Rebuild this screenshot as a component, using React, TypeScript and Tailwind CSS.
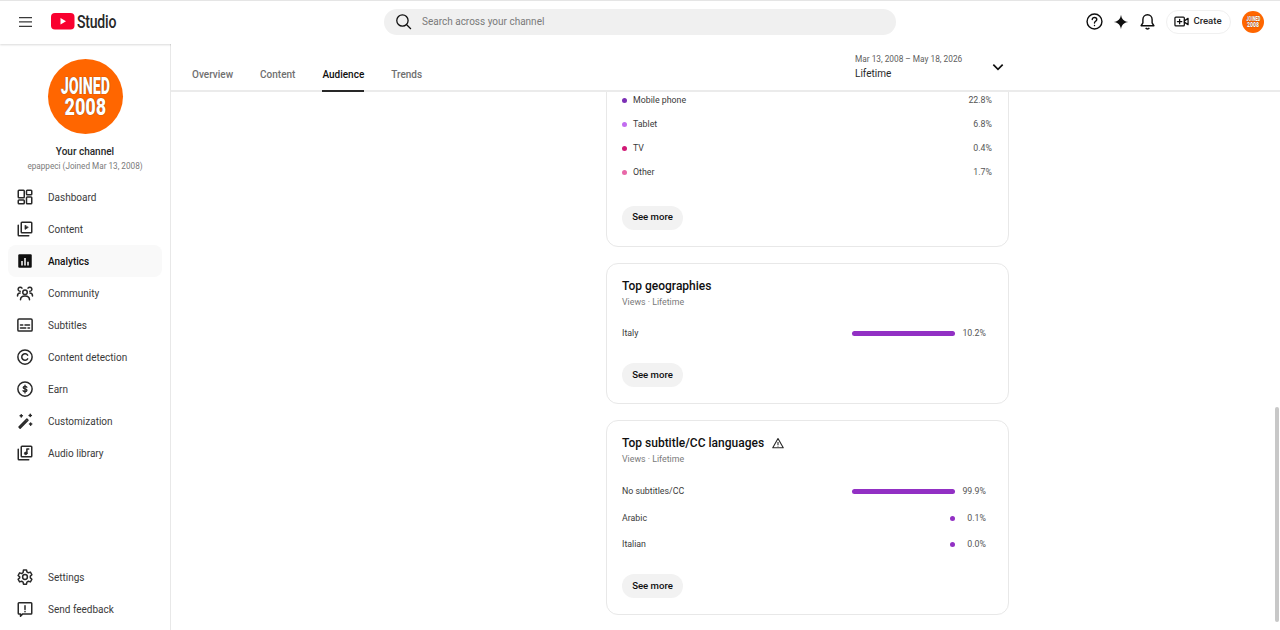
import type { ReactNode } from "react";

const ic = "fill-none stroke-[#282828]";

function Icon({ children, size = 18 }: { children: ReactNode; size?: number }) {
  return (
    <svg width={size} height={size} viewBox="0 0 24 24" className={ic} strokeWidth={2} strokeLinecap="round" strokeLinejoin="round">
      {children}
    </svg>
  );
}

const navIcons: Record<string, ReactNode> = {
  Dashboard: (
    <Icon>
      <rect x="3" y="3" width="8" height="10" rx="1" />
      <rect x="14" y="3" width="7" height="6" rx="1" />
      <rect x="3" y="16" width="8" height="5" rx="1" />
      <rect x="14" y="12" width="7" height="9" rx="1" />
    </Icon>
  ),
  Content: (
    <Icon>
      <rect x="7" y="3" width="14" height="14" rx="1" />
      <path d="M3 7v13a1 1 0 0 0 1 1h13" />
      <path d="M12 7.500v5l4-2.500z" fill="#282828" strokeWidth={1} />
    </Icon>
  ),
  Analytics: (
    <svg width="18" height="18" viewBox="0 0 24 24">
      <rect x="3" y="3" width="18" height="18" rx="1.500" fill="#0f0f0f" />
      <path d="M7 12h2v6H7zM11 8h2v10h-2zM15 13h2v5h-2z" fill="#fff" />
    </svg>
  ),
  Community: (
    <Icon>
      <circle cx="12" cy="11" r="3" />
      <path d="M6 21c0-3.500 2.500-5 6-5s6 1.500 6 5" />
      <path d="M8 5.500a2.800 2.800 0 1 0-2.500 4.300M16 5.500a2.800 2.800 0 1 1 2.500 4.300" />
      <path d="M2 16c0-2.500 1.500-4 3.500-4M22 16c0-2.500-1.500-4-3.500-4" />
    </Icon>
  ),
  Subtitles: (
    <Icon>
      <rect x="2.500" y="4" width="19" height="16" rx="1.500" />
      <path d="M6 12h3M12 12h6M6 16h7M16 16h2" />
    </Icon>
  ),
  "Content detection": (
    <Icon>
      <circle cx="12" cy="12" r="9.500" />
      <path d="M15.500 9.500a4.300 4.300 0 1 0 0 5" />
    </Icon>
  ),
  Earn: (
    <Icon>
      <circle cx="12" cy="12" r="9.500" />
      <path d="M14.500 9.600c-.4-.8-1.200-1.200-2.500-1.200-1.500 0-2.400.7-2.400 1.700 0 2.500 5 1.200 5 3.700 0 1.100-1 1.800-2.600 1.800-1.300 0-2.200-.5-2.700-1.300M12 6.800v10.400" strokeWidth={1.800} />
    </Icon>
  ),
  Customization: (
    <Icon>
      <path d="M4 20l1.500 1.500L16 11l-1.500-1.500z" />
      <path d="M7 3.500v3M5.500 5h3M19 3v3M17.500 4.500h3M19.500 14.500v3M18 16h3" />
    </Icon>
  ),
  "Audio library": (
    <Icon>
      <rect x="7" y="3" width="14" height="14" rx="1" />
      <path d="M3 7v13a1 1 0 0 0 1 1h13" />
      <circle cx="13" cy="12.500" r="1.800" fill="#282828" strokeWidth={1} />
      <path d="M14.500 12V6.500h2.500" />
    </Icon>
  ),
  Settings: (
    <Icon>
      <circle cx="12" cy="12" r="3.200" />
      <path d="M10 2.500h4l.6 2.800 1.900 1.100 2.700-.9 2 3.500-2.100 1.900v2.200l2.100 1.900-2 3.500-2.700-.9-1.900 1.100-.6 2.800h-4l-.6-2.800-1.900-1.100-2.700.9-2-3.500 2.100-1.900V11.900L2.800 10l2-3.500 2.700.9 1.900-1.100z" />
    </Icon>
  ),
  "Send feedback": (
    <Icon>
      <path d="M3 4.500a1 1 0 0 1 1-1h16a1 1 0 0 1 1 1v13a1 1 0 0 1-1 1H9l-3 3v-3H4a1 1 0 0 1-1-1z" />
      <path d="M12 7.500v5M12 15.300v.2" />
    </Icon>
  ),
};

const nav = ["Dashboard", "Content", "Analytics", "Community", "Subtitles", "Content detection", "Earn", "Customization", "Audio library"];

function NavRow({ label, active }: { label: string; active?: boolean }) {
  return (
    <div className={`mx-2 flex h-8 items-center gap-[14px] rounded-lg pl-2 ${active ? "bg-[#f9f9f9] font-medium text-[#0f0f0f]" : "text-[#3a3a3a]"}`}>
      <span className="flex w-[18px] justify-center">{navIcons[label]}</span>
      <span className="text-[10px]">{label}</span>
    </div>
  );
}

function JoinedBadge({ size, text }: { size: string; text: string }) {
  return (
    <div className={`flex flex-col items-center justify-center rounded-full bg-[#ff6600] font-black text-white ${size} ${text}`}>
      <span className="scale-x-[0.68] scale-y-[1.1] [text-shadow:0_0_1px_#5a2000]">JOINED</span>
      <span className="scale-x-[0.86] scale-y-[1.1] [text-shadow:0_0_1px_#5a2000]">2008</span>
    </div>
  );
}

function SeeMore() {
  return (
    <button className="flex h-6 w-[61px] items-center justify-center rounded-full bg-[#f2f2f2] text-[9.600px] font-medium text-[#0f0f0f]">
      See more
    </button>
  );
}

function BarRow({ label, value, width }: { label: string; value: string; width: number }) {
  return (
    <div className="flex h-[26.500px] items-center text-[8.800px] text-[#3a3a3a]">
      <span className="flex-1">{label}</span>
      <span className="flex h-[5px] w-[103px] justify-end">
        <span className="h-[5px] rounded-full bg-[#9230c4]" style={{ width }} />
      </span>
      <span className="w-[31px] text-right text-[#555]">{value}</span>
    </div>
  );
}

function DeviceRow({ dot, label, value }: { dot: string; label: string; value: string }) {
  return (
    <div className="flex h-6 items-center text-[8.800px] text-[#3a3a3a]">
      <span className={`mr-[6px] h-[5px] w-[5px] rounded-full ${dot}`} />
      <span className="flex-1">{label}</span>
      <span className="text-[#555]">{value}</span>
    </div>
  );
}

export default function App() {
  return (
    <div className="flex h-[630px] w-[1280px] flex-col overflow-hidden bg-white font-['Roboto',sans-serif]">
      {/* header */}
      <header className="z-10 flex h-[44px] shrink-0 items-center border-t border-[#e5e5e5] bg-white pb-[2px] pl-[18px] pr-4 shadow-[0_1px_2px_rgba(0,0,0,0.15)]">
        <svg width="15" height="12" viewBox="0 0 15 12" className="fill-[#3a3a3a]">
          <path d="M1 1h13v1.300H1zM1 5.300h13v1.300H1zM1 9.700h13V11H1z" />
        </svg>
        <div className="ml-[18px] flex items-center">
          <svg width="24" height="17" viewBox="0 0 24 17">
            <rect width="23.500" height="16.500" rx="4" fill="#f9002f" />
            <path d="M9.500 5v6.500l5.500-3.250z" fill="#fff" />
          </svg>
          <span className="ml-[2px] w-[40px] origin-left scale-x-[0.74] whitespace-nowrap text-[19px] font-medium leading-none tracking-[-0.3px] text-[#282828]">
            Studio
          </span>
        </div>
        <div className="ml-[267px] flex h-[26px] w-[512px] items-center rounded-full bg-[#f0f0f0] pl-[11px]">
          <svg width="17" height="17" viewBox="0 0 24 24" className="fill-none stroke-[#0f0f0f]" strokeWidth={1.800}>
            <circle cx="10.500" cy="10.500" r="8" />
            <path d="M16.500 16.500l6 6" />
          </svg>
          <span className="ml-[10px] text-[10px] text-[#7a7a7a]">Search across your channel</span>
        </div>
        <div className="ml-auto flex items-center">
          <svg width="17" height="17" viewBox="0 0 24 24" className="fill-none stroke-[#0f0f0f]" strokeWidth={2} strokeLinecap="round">
            <circle cx="12" cy="12" r="10.500" />
            <path d="M8.800 9.300c0-1.900 1.400-3 3.200-3s3.200 1.100 3.200 2.800c0 2.600-3.200 2.500-3.200 5M12 17.500v.2" />
          </svg>
          <svg width="16" height="16" viewBox="0 0 24 24" className="ml-[10px] fill-[#0f0f0f]">
            <path d="M12 1c1 6.500 4 10 11 11-7 1-10 4.500-11 11-1-6.500-4-10-11-11 7-1 10-4.500 11-11z" />
          </svg>
          <svg width="17" height="17" viewBox="0 0 24 24" className="ml-[10px] fill-none stroke-[#0f0f0f]" strokeWidth={2} strokeLinejoin="round">
            <path d="M12 2.500c-4 0-6.500 3-6.500 6.500v5L3 18h18l-2.500-4V9c0-3.500-2.500-6.500-6.500-6.500z" />
            <path d="M9.500 21c.5 1 1.400 1.500 2.500 1.500s2-.5 2.500-1.500" />
          </svg>
          <button className="ml-[10px] flex h-[24px] w-[65px] items-center justify-center gap-[4px] rounded-full border border-[#f0f0f0] bg-white pr-[1px] text-[9.600px] font-medium text-[#282828]">
            <svg width="15" height="15" viewBox="0 0 24 24" className="fill-none stroke-[#0f0f0f]" strokeWidth={2} strokeLinejoin="round" strokeLinecap="round">
              <rect x="1.500" y="5" width="15" height="14" rx="1.500" />
              <path d="M16.500 11l6-4v10l-6-4M9 8.500v7M5.500 12h7" />
            </svg>
            Create
          </button>
          <JoinedBadge size="ml-[11px] h-[22px] w-[22px] leading-[6px]" text="text-[6px]" />
        </div>
      </header>

      <div className="flex min-h-0 flex-1">
        {/* sidebar */}
        <aside className="flex w-[171px] shrink-0 flex-col border-r border-[#e8e8e8] pb-[5px] pt-[15px]">
          <div className="flex flex-col items-center">
            <JoinedBadge size="h-[75px] w-[75px] leading-[21px]" text="text-[21px]" />
            <div className="mt-[10px] text-[10px] font-medium text-[#282828]">Your channel</div>
            <div className="mt-[1px] text-[8.200px] text-[#7a7a7a]">epappeci (Joined Mar 13, 2008)</div>
          </div>
          <nav className="mt-[9px]">
            {nav.map((n) => (
              <NavRow key={n} label={n} active={n === "Analytics"} />
            ))}
          </nav>
          <div className="mt-auto">
            <NavRow label="Settings" />
            <NavRow label="Send feedback" />
          </div>
        </aside>

        {/* main */}
        <main className="relative flex min-w-0 flex-1 flex-col">
          <div className="z-10 flex h-[48px] shrink-0 items-end border-b-2 border-[#ebebeb] bg-white pl-[21px] pr-[274px]">
            <div className="flex gap-[27px] text-[10px] font-medium text-[#6f6f6f]">
              <span className="pb-[8px]">Overview</span>
              <span className="pb-[8px]">Content</span>
              <span className="-mb-[2px] border-b-2 border-[#282828] pb-[8px] text-[#0f0f0f]">Audience</span>
              <span className="pb-[8px]">Trends</span>
            </div>
            <div className="ml-auto flex h-full w-[151px] items-center">
              <div className="flex-1">
                <div className="text-[8.300px] text-[#606060]">Mar 13, 2008 – May 18, 2026</div>
                <div className="text-[10px] text-[#282828]">Lifetime</div>
              </div>
              <svg width="16" height="16" viewBox="0 0 24 24" className="fill-none stroke-[#0f0f0f]" strokeWidth={2.500}>
                <path d="M5 8.500l7 7 7-7" />
              </svg>
            </div>
          </div>

          <div className="min-h-0 flex-1 overflow-hidden">
            <div className="-mt-[41px] ml-[435px] flex w-[403px] flex-col gap-4">
              <section className="rounded-xl border border-[#e8e8e8] pb-4 pl-[15px] pr-[16px] pt-[36.500px]">
                <DeviceRow dot="bg-[#7c2fb5]" label="Mobile phone" value="22.8%" />
                <DeviceRow dot="bg-[#c26df0]" label="Tablet" value="6.8%" />
                <DeviceRow dot="bg-[#d11a76]" label="TV" value="0.4%" />
                <DeviceRow dot="bg-[#e868a8]" label="Other" value="1.7%" />
                <div className="mt-[21px]">
                  <SeeMore />
                </div>
              </section>
              <section className="rounded-xl border border-[#e8e8e8] pb-4 pl-[15px] pr-[16px] pt-[14px]">
                <h3 className="text-[12px] font-medium leading-[16px] text-[#0f0f0f]">Top geographies</h3>
                <p className="mt-[2px] text-[8.800px] text-[#7a7a7a]">Views · Lifetime</p>
                <div className="mt-[12px] pr-[6px]">
                  <BarRow label="Italy" value="10.2%" width={103} />
                </div>
                <div className="mt-[16px]">
                  <SeeMore />
                </div>
              </section>
              <section className="rounded-xl border border-[#e8e8e8] pb-4 pl-[15px] pr-[16px] pt-[14px]">
                <h3 className="flex items-center gap-[8px] text-[12px] font-medium leading-[16px] text-[#0f0f0f]">
                  Top subtitle/CC languages
                  <svg width="12" height="12" viewBox="0 0 24 24" className="fill-none stroke-[#282828]" strokeWidth={2.200} strokeLinejoin="round">
                    <path d="M12 3L1.500 21.500h21zM12 10v6M12 17.500v1.500" />
                  </svg>
                </h3>
                <p className="mt-[2px] text-[8.800px] text-[#7a7a7a]">Views · Lifetime</p>
                <div className="mt-[12px] pr-[6px]">
                  <BarRow label="No subtitles/CC" value="99.9%" width={103} />
                  <BarRow label="Arabic" value="0.1%" width={5} />
                  <BarRow label="Italian" value="0.0%" width={5} />
                </div>
                <div className="mt-[16px]">
                  <SeeMore />
                </div>
              </section>
            </div>
          </div>
          {/* scrollbar thumb */}
          <div className="absolute bottom-[8px] right-[1px] h-[215px] w-[4px] rounded-full bg-[#c8c8c8]" />
        </main>
      </div>
    </div>
  );
}
